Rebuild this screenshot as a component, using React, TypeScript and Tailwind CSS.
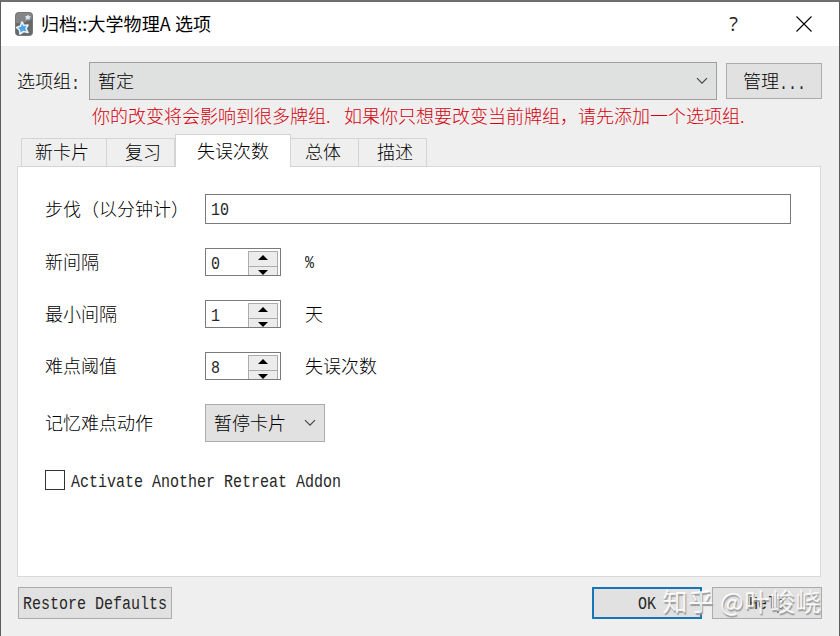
import type { ReactNode } from 'react'

const tabs = [
  { label: '新卡片', width: 'w-[86px]', pad: 'pl-[13px]' },
  { label: '复习', width: 'w-[68px]', pad: 'pl-[18px]' },
  { label: '失误次数', width: 'w-[116px]', pad: 'pl-[21px]', active: true },
  { label: '总体', width: 'w-[68px]', pad: 'pl-[14px]' },
  { label: '描述', width: 'w-[68px]', pad: 'pl-[18px]' },
]

const spinRows = [
  { label: '新间隔', value: '0', unit: '%', latin: true },
  { label: '最小间隔', value: '1', unit: '天' },
  { label: '难点阈值', value: '8', unit: '失误次数' },
]

// Half-width text, squeezed so that every character takes 9px
function Latin({ children }: { children: ReactNode }) {
  return (
    <span className="inline-block origin-left scale-x-[0.8333] whitespace-pre font-['Liberation_Mono',monospace] text-[18px] text-[#262626]">
      {children}
    </span>
  )
}

function AppIcon() {
  return (
    <svg width="18" height="24" viewBox="0 0 18 24" aria-hidden="true">
      <rect x="0.5" y="0.5" width="17" height="23" rx="3" fill="#686868" stroke="#777" />
      <path d="M1 11 Q9 12 17 7 V3.500 Q17 1 14 1 H4 Q1 1 1 3.500Z" fill="#858585" />
      <path
        d="M7 10 L9 13.500 L13 13 L11 16.500 L13 20.500 L8.500 19.500 L5 22 L4.500 18 L1.500 15.500 L5.500 14Z"
        fill="#4ba3ea"
        stroke="#e4f3ff"
        strokeWidth="1.600"
        strokeLinejoin="round"
      />
      <path d="M13 2.500 L14 4 L16 4.500 L14.500 6 L14.500 8 L12.500 7 L10.500 8 L11 5.500 L10 4 L12 4Z" fill="#d3e7f6" />
    </svg>
  )
}

function Chevron() {
  return (
    <svg width="12" height="8" viewBox="0 0 12 8" fill="none" stroke="#444" strokeWidth="1.200" aria-hidden="true">
      <path d="M1 1.200 L6 6.200 L11 1.200" />
    </svg>
  )
}

function Arrow({ down }: { down?: boolean }) {
  return (
    <svg width="10" height="5" viewBox="0 0 10 5" className="shrink-0" aria-hidden="true">
      <path d={down ? 'M0 0 H10 L5 5Z' : 'M0 5 H10 L5 0Z'} fill="#000" />
    </svg>
  )
}

function SpinBox({ value }: { value: string }) {
  return (
    <div className="flex h-7 w-[76px] justify-between overflow-hidden border border-[#7a7a7a] bg-white pr-0.5">
      <span className="pl-[5px] leading-6">
        <Latin>{value}</Latin>
      </span>
      <div className="mt-0.5 flex h-7 w-[30px] shrink-0 flex-col border border-[#acacac] bg-[#ececec]">
        <div className="flex h-[15px] shrink-0 items-center justify-center border-b border-[#acacac] pb-[3px]">
          <Arrow />
        </div>
        <div className="flex justify-center pt-[3px]">
          <Arrow down />
        </div>
      </div>
    </div>
  )
}

export default function App() {
  return (
    <div className="relative flex h-[636px] w-[840px] flex-col overflow-hidden border-x border-t-2 border-x-[#5c5c5c] border-t-[#6f6f6f] bg-[#efefef] font-['Noto_Sans_CJK_SC',sans-serif] text-[18px] font-light leading-6 text-black">
      <header className="flex h-11 shrink-0 items-center bg-white pl-3.5">
        <AppIcon />
        <h1 className="ml-2 whitespace-pre pb-[3px] text-[18px] font-normal tracking-[0.1px]">归档::大学物理A 选项</h1>
        <span className="ml-auto mr-[58px] font-['Open_Sans',sans-serif] text-[20px] font-normal text-[#222]">?</span>
        <svg width="16" height="16" viewBox="0 0 16 16" className="mr-[27px]" stroke="#000" strokeWidth="1.100" aria-hidden="true">
          <path d="M0.500 0.500 L15.500 15.500 M15.500 0.500 L0.500 15.500" />
        </svg>
      </header>

      <div className="flex h-[54px] shrink-0 items-end pl-4 pr-[17px]">
        <span className="flex h-[38px] w-[72px] shrink-0 items-center whitespace-nowrap pb-0.5">
          选项组<span className="pt-1"><Latin>:</Latin></span>
        </span>
        <button type="button" className="flex h-[38px] w-[628px] items-center justify-between border border-[#9f9f9f] bg-[#dfe1e0] px-2">
          <span className="pb-0.5">暂定</span>
          <Chevron />
        </button>
        <button type="button" className="mb-px ml-[9px] flex h-9 w-24 items-center border border-[#acacac] bg-[#e1e1e1] pb-0.5 pl-4">
          管理<span className="pt-1"><Latin>...</Latin></span>
        </button>
      </div>

      <p className="h-[34px] shrink-0 whitespace-nowrap pl-[91px] pt-[3px] text-[#d4000c]">
        你的改变将会影响到很多牌组<span className="inline-block w-[18px]">.</span>如果你只想要改变当前牌组，请先添加一个选项组.
      </p>

      <nav className="relative z-10 -mb-px flex h-[33px] shrink-0 items-end pl-5">
        {tabs.map((tab) => (
          <button
            key={tab.label}
            type="button"
            className={`flex shrink-0 whitespace-nowrap border-[#d4d4d4] ${tab.width} ${tab.pad} ${
              tab.active ? 'h-[33px] border-x border-t bg-white pt-[3px]' : 'h-[29px] border-y border-r bg-[#efefef] first:border-l'
            }`}
          >
            {tab.label}
          </button>
        ))}
      </nav>

      <main className="ml-4 h-[411px] w-[804px] shrink-0 border border-[#d9d9d9] bg-white pl-[27px] pt-[27px]">
        <div className="flex h-[30px] items-center">
          <span className="w-40 pb-0.5">步伐（以分钟计）</span>
          <div className="flex h-[30px] w-[586px] items-center border border-[#7a7a7a] pl-[5px] pt-0.5">
            <Latin>10</Latin>
          </div>
        </div>
        <div className="mt-6 flex flex-col gap-6">
          {spinRows.map((row) => (
            <div key={row.label} className="flex h-7 items-center">
              <span className="w-40 pb-0.5">{row.label}</span>
              <SpinBox value={row.value} />
              <span className="ml-6 pb-0.5">{row.latin ? <Latin>{row.unit}</Latin> : row.unit}</span>
            </div>
          ))}
        </div>
        <div className="mt-6 flex h-[38px] items-center">
          <span className="w-40 pb-0.5">记忆难点动作</span>
          <button type="button" className="flex h-[38px] w-[120px] items-center justify-between border border-[#acacac] bg-[#e1e1e1] px-2">
            <span className="pb-0.5">暂停卡片</span>
            <Chevron />
          </button>
        </div>
        <label className="mt-[27px] flex h-6 items-center">
          <span className="mb-0.5 h-5 w-5 border border-[#333]" />
          <span className="ml-[6px] pb-0.5">
            <Latin>Activate Another Retreat Addon</Latin>
          </span>
        </label>
      </main>

      <footer className="mt-2.5 flex h-8 shrink-0 pl-[17px]">
        <button type="button" className="flex w-[154px] items-center border border-[#acacac] bg-[#e1e1e1] pl-1 pt-0.5">
          <Latin>Restore Defaults</Latin>
        </button>
        <button type="button" className="ml-[420px] flex w-[110px] items-center border-2 border-[#1677b8] bg-[#e1e1e1] pl-11 pt-0.5">
          <Latin>OK</Latin>
        </button>
        <button type="button" className="ml-2.5 flex w-[110px] items-center border border-[#acacac] bg-[#e1e1e1] pl-9 pt-0.5">
          <Latin>Help</Latin>
        </button>
      </footer>

      <div className="pointer-events-none absolute bottom-5 right-[18px] z-20 whitespace-pre text-[25px] font-normal leading-8 tracking-[0.6px] text-white/85 [text-shadow:1px_2px_1px_#999]">
        知乎 @叶峻峣
      </div>
    </div>
  )
}
